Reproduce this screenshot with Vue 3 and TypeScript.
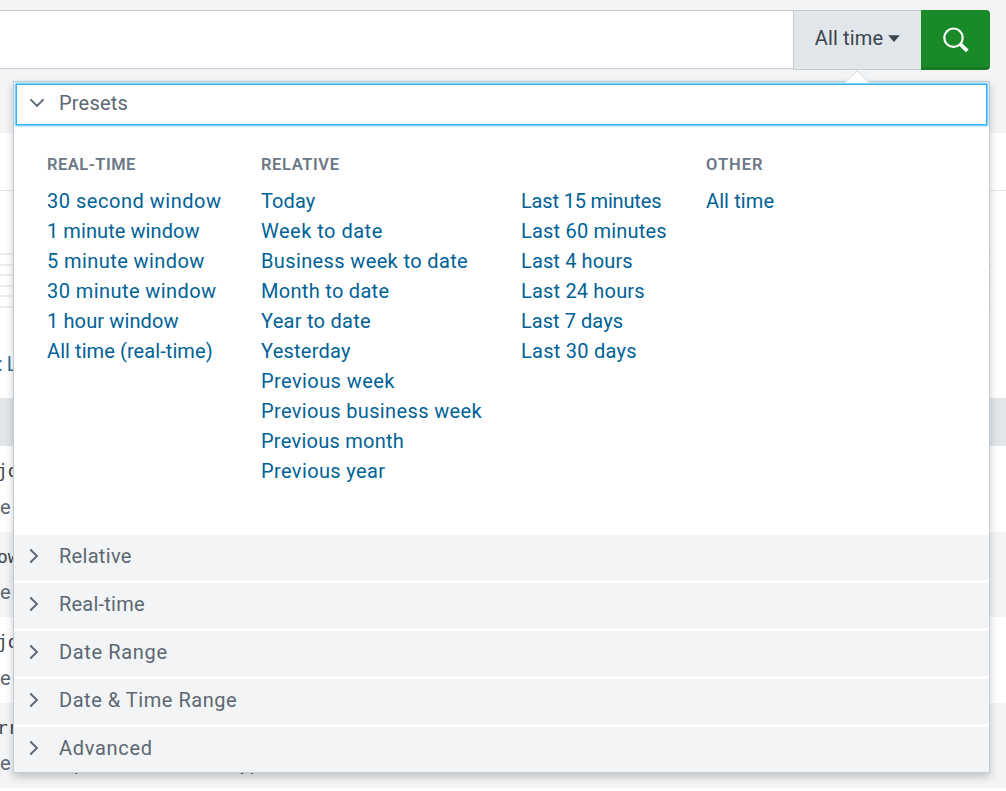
<script setup lang="ts">
interface Label { label: string; spacing: number }
interface Column { title: Label; cls: string; links: Label[] }

const text = (label: string, spacing = 0): Label => ({ label, spacing })

const columns: Column[] = [
  {
    title: text('REAL-TIME', 0.5),
    cls: 'realtime',
    links: [
      text('30 second window', 0.52), text('1 minute window', 0.08), text('5 minute window', 0.42),
      text('30 minute window', 0.43), text('1 hour window', 0.13), text('All time (real-time)', 0.08),
    ],
  },
  {
    title: text('RELATIVE', 0.6),
    cls: 'relative',
    links: [
      text('Today', 0.1), text('Week to date', 0.5), text('Business week to date', 0.37),
      text('Month to date', 0.3), text('Year to date', 0.27), text('Yesterday', 0.25),
      text('Previous week', 0.42), text('Previous business week', 0.36),
      text('Previous month', 0.25), text('Previous year', 0.38),
    ],
  },
  {
    title: text(''),
    cls: 'last',
    links: [
      text('Last 15 minutes', -0.17), text('Last 60 minutes', 0.2), text('Last 4 hours', 0.13),
      text('Last 24 hours', 0.18), text('Last 7 days', 0.05), text('Last 30 days', 0.25),
    ],
  },
  { title: text('OTHER', 1), cls: 'other', links: [text('All time', 0.1)] },
]

const sections: Label[] = [
  text('Relative', 0.3), text('Real-time', 0.22), text('Date Range', 0.65),
  text('Date & Time Range', 0.53), text('Advanced', 0.7),
]
const events: string[] = ['jo', 'ow', 'jo', 'rr']
const track = (l: Label) => ({ letterSpacing: `${l.spacing}px` })
</script>

<template>
  <div class="page">
    <header class="top">
      <div class="search-bar">
        <div class="query"></div>
        <button class="time-btn">
          <span>All time</span>
          <svg width="12" height="7" viewBox="0 0 12 7"><path d="M0.2 0.2H11.8L6 6.9Z" fill="#3c444d" /></svg>
        </button>
        <button class="go">
          <svg width="28" height="28" viewBox="0 0 28 28" fill="none" stroke="#fff">
            <circle cx="11.5" cy="11.7" r="9.2" stroke-width="2.2" />
            <path d="M18 17.8L25.3 24.8" stroke-width="3.8" />
          </svg>
        </button>
      </div>
    </header>
    <div class="tabs"></div>
    <div class="timeline">
      <div class="grid"><i v-for="n in 6" :key="n"></i></div>
      <div class="list-tools"><span>:</span><span>L</span></div>
    </div>
    <div class="table-head"></div>
    <div v-for="(e, i) in events" :key="i" class="event" :class="{ alt: i % 2 === 1 }">
      <div class="raw">{{ e }}</div>
      <div class="meta"><span>e</span><template v-if="i === 3"><span class="m1">p</span><span class="m2">|</span><span class="m3">yp</span></template></div>
    </div>

    <div class="popover">
      <svg class="pointer" width="24" height="13" viewBox="0 0 24 13">
        <path d="M0.5 12L12 0.7L23.5 12V13H0.5Z" fill="#fff" />
        <path d="M0.5 12L12 0.7L23.5 12" fill="none" stroke="#d2d8de" />
      </svg>
      <div class="presets-head">
        <svg width="16" height="10" viewBox="0 0 16 10"><path d="M1.5 1.3L8 8L14.5 1.3" fill="none" stroke="#5c6773" stroke-width="1.9" /></svg>
        <span>Presets</span>
      </div>
      <div class="columns">
        <div v-for="c in columns" :key="c.cls" class="col" :class="c.cls">
          <h4 :style="track(c.title)">{{ c.title.label }}</h4>
          <a v-for="l in c.links" :key="l.label" :style="track(l)">{{ l.label }}</a>
        </div>
      </div>
      <div class="sections">
        <div v-for="s in sections" :key="s.label" class="section">
          <svg width="10" height="16" viewBox="0 0 10 16"><path d="M1.3 1.5L8 8L1.3 14.5" fill="none" stroke="#5c6773" stroke-width="1.9" /></svg>
          <span :style="track(s)">{{ s.label }}</span>
        </div>
      </div>
    </div>
  </div>
</template>

<style>
body { background: #fff; overflow: hidden; }
</style>

<style scoped>
* { box-sizing: border-box; }
.page { position: relative; width: 1006px; height: 788px; overflow: hidden; font-family: Roboto, "Liberation Sans", sans-serif; font-size: 20px; color: #5c6773; }
.top { height: 133px; padding-top: 10px; background: #f2f4f5; }
.search-bar { display: flex; align-items: flex-start; width: 990px; height: 60px; }
.query { flex: 1; height: 59px; background: #fff; border: solid #c3cbd4; border-width: 1px 0; }
button { margin: 0; font: inherit; height: 60px; display: flex; align-items: center; justify-content: center; }
.time-btn { width: 128px; padding: 0 0 4px 0; background: #e1e6eb; border: 1px solid #c3cbd4; border-right: 0; color: #3c444d; gap: 5px; letter-spacing: 0.15px; }
.go { width: 69px; padding: 0; background: #1a8929; border: 0; border-bottom: 3px solid #197a26; border-radius: 0 4px 4px 0; }
.go svg { margin: 2px 0 0 1px; }
.tabs { height: 58px; border-bottom: 1px solid #e1e6eb; }
.timeline { height: 207px; padding-top: 62px; }
.grid { display: flex; flex-direction: column; justify-content: space-between; height: 55px; width: 991px; }
.grid i { height: 2px; background: #eeeeee; }
.list-tools { display: flex; gap: 4px; margin: 44px 0 0 -2px; line-height: 24px; color: #3c6f9f; }
.table-head { height: 48px; background: #e1e6eb; }
.event { height: 85.5px; padding-top: 14px; }
.event.alt { background: #f2f4f5; }
.raw { font-family: "DejaVu Sans Mono", monospace; font-size: 18px; line-height: 22px; margin-left: -3px; color: #3c444d; }
.meta { display: flex; line-height: 24px; margin-top: 13px; }
.event.alt .meta { margin-top: 12px; }
.meta span { width: 74px; }
.meta .m1 { width: 80px; }
.meta .m2 { width: 86px; color: #c3cbd4; }
.popover { position: absolute; left: 13px; top: 81px; width: 977px; height: 692px; padding: 3px 2px 0; background: #fff; border: 1px solid #c3cbd4; box-shadow: 0 4px 8px rgba(0, 0, 0, 0.2); }
.pointer { position: absolute; left: 831px; top: -12px; }
.presets-head { display: flex; align-items: center; height: 39px; margin: 0 1px; padding: 0 0 3px 12px; box-shadow: 0 0 1px 1px #35b2fb, 0 0 2px 2px #5cc0fc; }
.presets-head span { margin-left: 14px; letter-spacing: 0.2px; }
.columns { display: grid; grid-template-columns: 214px 260px 185px 1fr; height: 411px; padding: 30px 0 0 31px; }
.col { display: flex; flex-direction: column; }
h4 { margin: 0 0 10px; height: 22px; line-height: 22px; font-size: 16.5px; font-weight: 600; color: #6b7785; }
a { height: 30px; line-height: 30px; color: #006297; white-space: nowrap; }
.sections { display: grid; gap: 3px; margin: 0 -2px; }
.section { display: flex; align-items: center; height: 45px; padding: 0 0 3px 15px; background: #f2f4f5; }
.section span { margin-left: 20px; }
</style>
